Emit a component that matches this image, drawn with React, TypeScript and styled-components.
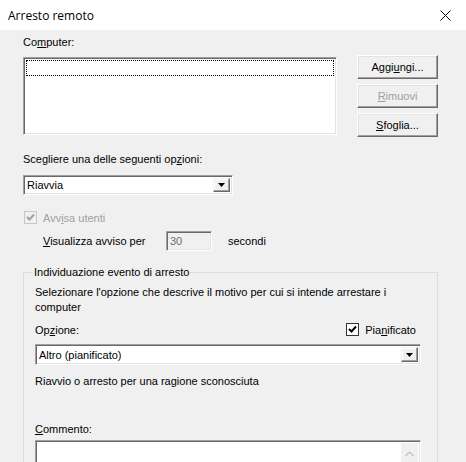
import { createGlobalStyle, styled } from 'styled-components';

const GlobalStyle = createGlobalStyle`
  html, body {
    margin: 0;
    padding: 0;
    background: #f0f0f0;
  }
  body {
    font-family: "Liberation Sans", Arial, sans-serif;
    font-size: 11px;
    color: #000;
  }
`;

function CheckMark({ color }: { color: string }) {
    return (
        <svg width="9" height="9" viewBox="0 0 9 9">
            <path d="M1 4 L3.5 6.5 L8 1.5" fill="none" stroke={color} strokeWidth="2" />
        </svg>
    );
}

function Combo({ value, width, height }: { value: string; width: string; height: number }) {
    return (
        <ComboBox $width={width} $height={height}>
            <ComboText>{value}</ComboText>
            <ComboButton>
                <svg width="7" height="4" viewBox="0 0 7 4">
                    <path d="M0 0 H7 L3.5 4 Z" fill="#000" />
                </svg>
            </ComboButton>
        </ComboBox>
    );
}

export default function App() {
    return (
        <>
            <GlobalStyle />
            <Window>
                <TitleBar>
                    <Title>Arresto remoto</Title>
                    <CloseIcon width="11" height="11" viewBox="0 0 11 11">
                        <path d="M0.5 0.5 L10.5 10.5 M10.5 0.5 L0.5 10.5" stroke="#000" strokeWidth="1" />
                    </CloseIcon>
                </TitleBar>
                <Body>
                    <TopRow>
                        <LeftCol>
                            <Label>
                                Co<u>m</u>puter:
                            </Label>
                            <ListBox>
                                <FocusRow />
                            </ListBox>
                        </LeftCol>
                        <ButtonCol>
                            <Button>
                                <span>
                                    Aggi<u>u</u>ngi...
                                </span>
                            </Button>
                            <Button $disabled>
                                <span>
                                    <u>R</u>imuovi
                                </span>
                            </Button>
                            <Button>
                                <span>
                                    <u>S</u>foglia...
                                </span>
                            </Button>
                        </ButtonCol>
                    </TopRow>

                    <SectionLabel>
                        Scegliere una delle seguenti op<u>z</u>ioni:
                    </SectionLabel>
                    <ComboWrap>
                        <Combo value="Riavvia" width="210px" height={20} />
                    </ComboWrap>

                    <CheckRow $disabled>
                        <CheckBox $disabled>
                            <CheckMark color="#a0a0a0" />
                        </CheckBox>
                        <span>
                            Avv<u>i</u>sa utenti
                        </span>
                    </CheckRow>

                    <DelayRow>
                        <DelayLabel>
                            <u>V</u>isualizza avviso per
                        </DelayLabel>
                        <DisabledEdit>30</DisabledEdit>
                        <Seconds>secondi</Seconds>
                    </DelayRow>

                    <GroupBox>
                        <Legend>Individuazione evento di arresto</Legend>
                        <Paragraph>
                            Selezionare l'opzione che descrive il motivo per cui si intende arrestare i
                            <br />
                            computer
                        </Paragraph>
                        <OptionRow>
                            <span>
                                Op<u>z</u>ione:
                            </span>
                            <CheckRow as="span">
                                <CheckBox>
                                    <CheckMark color="#000" />
                                </CheckBox>
                                <span>
                                    Pia<u>n</u>ificato
                                </span>
                            </CheckRow>
                        </OptionRow>
                        <ReasonCombo>
                            <Combo value="Altro (pianificato)" width="100%" height={21} />
                        </ReasonCombo>
                        <Description>Riavvio o arresto per una ragione sconosciuta</Description>
                        <CommentLabel>
                            <u>C</u>ommento:
                        </CommentLabel>
                        <CommentBox>
                            <ScrollBar>
                                <svg width="9" height="6" viewBox="0 0 9 6">
                                    <path d="M0.5 5 L4.5 1 L8.5 5" fill="none" stroke="#c0c0c0" strokeWidth="1.2" />
                                </svg>
                            </ScrollBar>
                        </CommentBox>
                    </GroupBox>
                </Body>
            </Window>
        </>
    );
}

const Window = styled.div`
    width: 466px;
    height: 462px;
    overflow: hidden;
    display: flex;
    flex-direction: column;
    background: #f0f0f0;
`;

const TitleBar = styled.div`
    height: 30px;
    flex-shrink: 0;
    background: #fff;
    display: flex;
    align-items: center;
    justify-content: space-between;
    padding: 0 15px 0 8px;
`;

const Title = styled.span`
    font-family: "Open Sans", "Noto Sans", sans-serif;
    font-size: 12px;
    color: #000;
`;

const CloseIcon = styled.svg`
    display: block;
`;

const Body = styled.div`
    padding-left: 23px;
    display: flex;
    flex-direction: column;
`;

const TopRow = styled.div`
    display: flex;
`;

const LeftCol = styled.div`
    display: flex;
    flex-direction: column;
`;

const Label = styled.div`
    line-height: 13px;
    margin-top: 6px;
`;

const sunken = `
    box-sizing: border-box;
    border-style: solid;
    border-width: 1px;
    border-color: #a0a0a0 #fff #fff #a0a0a0;
    box-shadow: inset 1px 1px 0 #696969, inset -1px -1px 0 #e3e3e3;
`;

const ListBox = styled.div`
    ${sunken};
    margin-top: 8px;
    width: 314px;
    height: 78px;
    background: #fff;
    padding: 2px;
`;

const FocusRow = styled.div`
    height: 14px;
    border: 1px dotted #000;
`;

const ButtonCol = styled.div`
    margin-left: 20px;
    padding-top: 25px;
    display: flex;
    flex-direction: column;
    gap: 5px;
`;

const Button = styled.div<{ $disabled?: boolean }>`
    box-sizing: border-box;
    width: 81px;
    height: 24px;
    display: flex;
    align-items: center;
    justify-content: center;
    background: #f0f0f0;
    color: ${(p) => (p.$disabled ? '#a0a0a0' : '#000')};
    border-style: solid;
    border-width: 1px;
    border-color: #fff #696969 #696969 #fff;
    box-shadow: inset -1px -1px 0 #a0a0a0, inset 1px 1px 0 #e3e3e3;
`;

const SectionLabel = styled.div`
    line-height: 13px;
    margin-top: 16px;
`;

const ComboWrap = styled.div`
    margin-top: 9px;
`;

const ComboBox = styled.div<{ $width: string; $height: number }>`
    ${sunken};
    width: ${(p) => p.$width};
    height: ${(p) => p.$height}px;
    background: #fff;
    display: flex;
    align-items: stretch;
    padding: 2px;
`;

const ComboText = styled.div`
    flex: 1;
    display: flex;
    align-items: center;
    padding-left: 1px;
`;

const ComboButton = styled.div`
    box-sizing: border-box;
    width: 17px;
    display: flex;
    align-items: center;
    justify-content: center;
    background: #f0f0f0;
    border-style: solid;
    border-width: 1px;
    border-color: #f0f0f0 #696969 #696969 #f0f0f0;
    box-shadow: inset -1px -1px 0 #a0a0a0, inset 1px 1px 0 #fff;
`;

const CheckRow = styled.div<{ $disabled?: boolean }>`
    display: flex;
    align-items: center;
    gap: 6px;
    height: 13px;
    margin-top: ${(p) => (p.$disabled ? '16px' : '0')};
    padding-left: ${(p) => (p.$disabled ? '1px' : '0')};
    color: ${(p) => (p.$disabled ? '#a0a0a0' : '#000')};
`;

const CheckBox = styled.span<{ $disabled?: boolean }>`
    box-sizing: border-box;
    width: 13px;
    height: 13px;
    display: flex;
    align-items: center;
    justify-content: center;
    background: ${(p) => (p.$disabled ? '#f0f0f0' : '#fff')};
    border: 1px solid ${(p) => (p.$disabled ? '#c8c8c8' : '#333')};
`;

const DelayRow = styled.div`
    display: flex;
    align-items: center;
    margin-top: 7px;
    padding-left: 20px;
    height: 20px;
`;

const DelayLabel = styled.span`
    width: 123px;
`;

const DisabledEdit = styled.div`
    ${sunken};
    width: 46px;
    height: 20px;
    display: flex;
    align-items: center;
    padding-left: 3px;
    color: #6d6d6d;
    background: #f0f0f0;
`;

const Seconds = styled.span`
    margin-left: 16px;
`;

const GroupBox = styled.fieldset`
    box-sizing: border-box;
    width: 415px;
    margin: 15px 0 0 0;
    padding: 0 16px 0 11px;
    border: 1px solid #dcdcdc;
    min-inline-size: 0;
`;

const Legend = styled.legend`
    padding: 0 1px;
    margin-left: -2px;
    line-height: 13px;
`;

const Paragraph = styled.div`
    margin-top: 6px;
    line-height: 15px;
    white-space: nowrap;
`;

const OptionRow = styled.div`
    margin-top: 7px;
    height: 15px;
    display: flex;
    align-items: center;
    justify-content: space-between;
    padding-right: 5px;
`;

const ReasonCombo = styled.div`
    margin-top: 7px;
`;

const Description = styled.div`
    margin-top: 10px;
    line-height: 13px;
`;

const CommentLabel = styled.div`
    margin-top: 35px;
    line-height: 13px;
`;

const CommentBox = styled.div`
    ${sunken};
    margin-top: 4px;
    height: 60px;
    background: #fff;
    display: flex;
    justify-content: flex-end;
    padding: 2px;
`;

const ScrollBar = styled.div`
    width: 17px;
    background: #f0f0f0;
    display: flex;
    justify-content: center;
    padding-top: 8px;
`;
